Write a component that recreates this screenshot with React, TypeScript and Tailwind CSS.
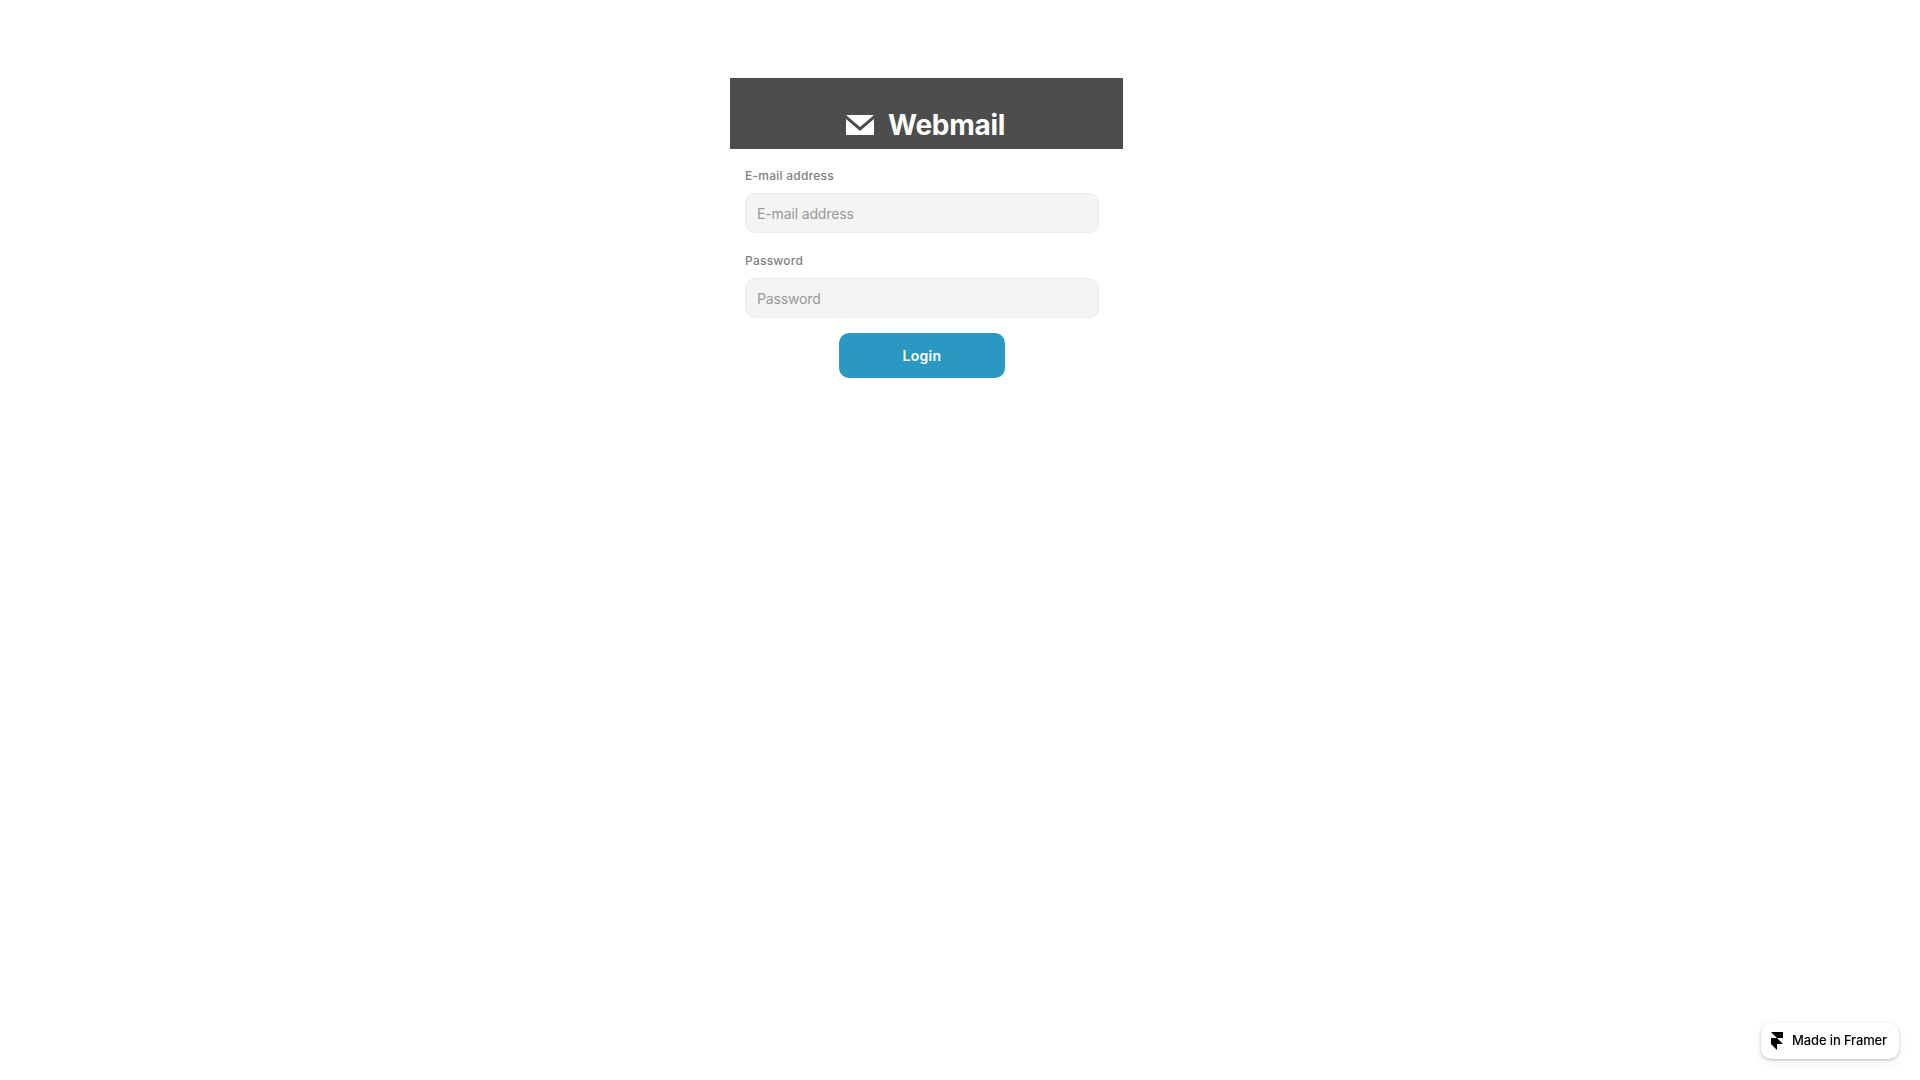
import React from 'react';

const Field: React.FC<{ label: string; type?: string }> = ({ label, type = 'text' }) => (
  <div className="flex flex-col">
    <label className="h-[18px] text-[12px] leading-[18px] font-[450] tracking-[0.02em] text-[#808080]">{label}</label>
    <input
      type={type}
      placeholder={label}
      className="mt-[8px] h-[40px] w-[354px] rounded-[10px] border border-[#ebebeb] bg-[#f4f4f4] px-[11px] text-[14px] tracking-[-0.01em] text-[#333] outline-none placeholder:text-[#999]"
    />
  </div>
);

const App: React.FC = () => {
  return (
    <div className="min-h-screen bg-white font-['Inter',sans-serif]">
      <div className="ml-[730px] w-[393px] pt-[78px]">
        <div className="flex h-[71px] items-end gap-[14px] bg-[#4d4d4d] pb-[10px] pl-[116px]">
          <svg width="28" height="20" viewBox="0 0 28 20" className="mb-[4px]">
            <path d="M0 0h28L14 12z" fill="#fff" />
            <path d="M0 4l14 12L28 4v16H0z" fill="#fff" />
          </svg>
          <span className="text-[28px] leading-[28px] font-bold tracking-[-0.01em] text-white">Webmail</span>
        </div>
        <form className="pl-[15px] pt-[18px]">
          <div className="flex flex-col gap-[19px]">
            <Field label="E-mail address" />
            <Field label="Password" type="password" />
          </div>
          <button type="button" className="ml-[94px] mt-[15px] h-[45px] w-[166px] rounded-[10px] bg-[#2b98c2] text-[14px] font-semibold tracking-[0.02em] text-white">
            Login
          </button>
        </form>
      </div>
      <a className="fixed bottom-[21px] right-[21px] flex h-[36px] w-[138px] items-center gap-[9px] rounded-[10px] bg-white pl-[10px] text-[13px] font-medium tracking-[-0.01em] text-black shadow-[0_1px_3px_rgba(0,0,0,0.25),0_4px_12px_rgba(0,0,0,0.06)]">
        <svg width="12" height="18" viewBox="0 0 14 21">
          <path d="M0 0h14v7H7zM0 7h7l7 7H7v7l-7-7z" fill="#000" />
        </svg>
        <span>Made in Framer</span>
      </a>
    </div>
  );
};

export default App;
